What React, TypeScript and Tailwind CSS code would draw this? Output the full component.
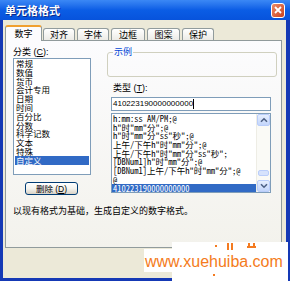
import React from "react";

const categories = [
  "常规",
  "数值",
  "货币",
  "会计专用",
  "日期",
  "时间",
  "百分比",
  "分数",
  "科学记数",
  "文本",
  "特殊",
  "自定义",
];

const formats = [
  "h:mm:ss AM/PM;@",
  'h"时"mm"分";@',
  'h"时"mm"分"ss"秒";@',
  '上午/下午h"时"mm"分";@',
  '上午/下午h"时"mm"分"ss"秒";',
  '[DBNum1]h"时"mm"分";@',
  '[DBNum1]上午/下午h"时"mm"分";@',
  "@",
  "410223190000000000",
];

const tabs = [
  { label: "对齐", w: "w-[32px]" },
  { label: "字体", w: "w-[32px]" },
  { label: "边框", w: "w-[34px]" },
  { label: "图案", w: "w-[33px]" },
  { label: "保护", w: "w-[32px]" },
];

const Chevron = ({ up }: { up?: boolean }) => (
  <svg width="8" height="6" viewBox="0 0 8 6">
    <path
      d={up ? "M1 4.8 L4 1.8 L7 4.8" : "M1 1.2 L4 4.2 L7 1.2"}
      fill="none"
      stroke="#4d6185"
      strokeWidth="1.6"
    />
  </svg>
);

const App: React.FC = () => {
  return (
    <div className="relative w-[290px] h-[281px] overflow-hidden bg-[#1539b5] font-['Noto_Sans_CJK_SC',sans-serif] text-[9px] leading-[10px] text-black">
      {/* Title bar */}
      <div className="h-[20px] flex items-center justify-between pl-[5px] pr-[5px] bg-gradient-to-b from-[#3b88f5] via-[#0b5de5] to-[#0753dc]">
        <span className="text-[11px] leading-[12px] font-bold text-white [text-shadow:1px_1px_0_#0a2a8a]">
          单元格格式
        </span>
        <div className="w-[14px] h-[15px] flex items-center justify-center rounded-[3px] border border-white bg-gradient-to-br from-[#ec8a66] to-[#c8401e]">
          <svg width="8" height="8" viewBox="0 0 8 8">
            <path d="M1 1 L7 7 M7 1 L1 7" stroke="#fff" strokeWidth="1.8" />
          </svg>
        </div>
      </div>

      {/* Dialog body */}
      <div className="h-[258px] ml-[3px] mr-[4px] bg-[#ece9d8] pl-[2px] pt-[5px]">
        {/* Tabs */}
        <div className="relative z-10 flex items-end h-[16px] -mb-px">
          <div className="w-[37px] h-[16px] flex items-center justify-center bg-[#fcfcfe] border-x border-[#919b9c] border-t-[2px] border-t-[#f0a030] rounded-t-[3px]">
            数字
          </div>
          <div className="flex items-end gap-[2px] ml-px">
            {tabs.map((t) => (
              <div
                key={t.label}
                className={`${t.w} h-[12px] mb-px flex items-center justify-center border-x border-t border-[#919b9c] rounded-t-[3px] bg-gradient-to-b from-white to-[#ecebe6]`}
              >
                {t.label}
              </div>
            ))}
          </div>
        </div>

        {/* Tab panel */}
        <div className="w-[277px] h-[208px] border border-[#919b9c] bg-gradient-to-b from-[#fcfcfe] to-[#f3f2ec] pl-[7px] pt-[6px] flex flex-col">
          <div className="flex">
            {/* Left column */}
            <div className="w-[78px] flex flex-col">
              <div className="h-[11px] font-['Liberation_Sans','Noto_Sans_CJK_SC',sans-serif]">
                分类 (<span className="underline">C</span>):
              </div>
              <div className="h-[117px] border border-[#7f9db9] bg-white px-px">
                {categories.map((c) => (
                  <div
                    key={c}
                    className={`h-[8.8px] leading-[8.8px] pl-px text-[8.5px] whitespace-nowrap ${
                      c === "自定义" ? "bg-[#316ac5] text-white" : ""
                    }`}
                  >
                    {c}
                  </div>
                ))}
              </div>
              <button className="mt-[7px] ml-[12px] w-[53px] h-[13px] flex items-center justify-center rounded-[3px] border border-[#003c74] bg-gradient-to-b from-white via-[#f4f3ee] to-[#d8d2c6] text-[8.5px] leading-[10px] font-['Liberation_Sans','Noto_Sans_CJK_SC',sans-serif]">
                删除 (<span className="underline">D</span>)
              </button>
            </div>

            {/* Right column */}
            <div className="ml-[16px] w-[170px] flex flex-col">
              <fieldset className="h-[30px] border border-[#d0d0bf] rounded-[3px]">
                <legend className="ml-[5px] px-px text-[#0046d5] leading-[10px]">
                  示例
                </legend>
              </fieldset>
              <div className="mt-[6px] ml-[6px] h-[10px] font-['Liberation_Sans','Noto_Sans_CJK_SC',sans-serif]">
                类型 (<span className="underline">T</span>):
              </div>
              <div className="mt-[4px] ml-[4px] w-[160px] h-[14px] border border-[#7f9db9] bg-white flex items-center pl-[1px] text-[8px] font-['Liberation_Sans',sans-serif]">
                410223190000000000
                <span className="w-px h-[10px] bg-black" />
              </div>
              <div className="mt-[2px] ml-[4px] w-[160px] h-[80px] border border-[#7f9db9] bg-white flex">
                <div className="flex-1 min-w-0 font-['Noto_Sans_Mono_CJK_SC','Liberation_Mono','Noto_Sans_CJK_SC',monospace] text-[8.5px]">
                  {formats.map((f, i) => (
                    <div
                      key={i}
                      className={`h-[8.7px] leading-[8.7px] pl-px whitespace-nowrap ${
                        i === formats.length - 1 ? "bg-[#316ac5] text-white" : ""
                      }`}
                    >
                      {f}
                    </div>
                  ))}
                </div>
                {/* Scrollbar */}
                <div className="w-[14px] flex flex-col bg-[#fafaf6] border-l border-[#eeede5]">
                  <div className="h-[12px] flex items-center justify-center rounded-[2px] border border-[#b9cdfa] bg-gradient-to-b from-[#e6eefe] to-[#c3d5fb]">
                    <Chevron up />
                  </div>
                  <div className="flex-1 flex flex-col justify-end pb-[4px]">
                    <div className="h-[6px] mx-px rounded-[2px] border border-[#b9cdfa] bg-[#d6e2fc]" />
                  </div>
                  <div className="h-[12px] flex items-center justify-center rounded-[2px] border border-[#b9cdfa] bg-gradient-to-b from-[#e6eefe] to-[#c3d5fb]">
                    <Chevron />
                  </div>
                </div>
              </div>
            </div>
          </div>

          <div className="mt-[11px] leading-[10px] whitespace-nowrap">
            以现有格式为基础，生成自定义的数字格式。
          </div>
        </div>
      </div>

      {/* Watermark overlay */}
      <div className="absolute left-[172px] top-[242px] w-[116px] h-[39px] bg-white" />
      <div className="absolute left-[144px] top-[249px] w-[28px] h-[23px] bg-white" />
      <svg
        className="absolute left-[210px] top-[242px]"
        width="50"
        height="36"
        viewBox="0 0 50 36"
      >
        <rect x="5" y="3" width="2" height="2" fill="#f47b20" />
        <rect x="17" y="1" width="2" height="7" fill="#f47b20" />
        <rect x="21" y="1" width="2" height="7" fill="#f47b20" />
        <rect x="37" y="4" width="9" height="2" fill="#f47b20" />
        <rect x="38" y="1" width="2" height="5" fill="#f47b20" />
        <rect x="43" y="1" width="2" height="5" fill="#f47b20" />
        <rect x="3" y="32" width="2" height="2" fill="#f47b20" />
      </svg>
      <div className="absolute left-[145px] top-[253px] text-[16px] leading-[18px] text-[#f47b20] font-['Liberation_Sans',sans-serif]">
        www.xuehuiba.com
      </div>
    </div>
  );
};

export default App;
